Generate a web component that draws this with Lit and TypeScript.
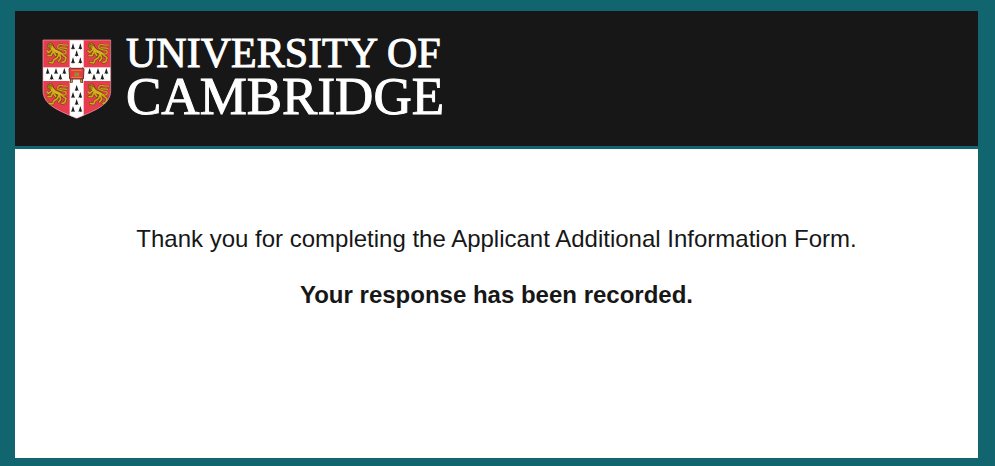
import { LitElement, html, svg, css } from "lit";
import { customElement } from "lit/decorators.js";

const LION_LIMBS =
  "M20 22 L10 30 L5 26 M23 27 L17 40 L8 40 M25 30 L31 39 M46 32 L54 40 L62 46 L58 58 L50 60 M42 34 L36 46 L26 52 L22 62 L12 60 M42 34 L46 48 L40 56";

const LION_TAIL =
  "M50 34 C60 38 67 30 60 25 C54 21 44 24 38 18 C34 10 42 4 50 7 C58 10 62 6 66 9 M44 15 C52 18 58 16 65 18";

const LIONS = [
  [46, 43],
  [169, 43],
  [46, 166],
  [169, 166],
];

const ERMINE_COLUMN = [
  [129, 56], [151, 56], [140, 77], [129, 98], [151, 98],
  [140, 181], [129, 202], [151, 202], [140, 223], [129, 244], [151, 244],
];

const ERMINE_ROW = [
  [53, 130], [78, 130], [103, 130], [65, 147], [91, 147],
  [179, 130], [204, 130], [229, 130], [192, 147], [217, 147],
];

@customElement("cambridge-crest")
export class CambridgeCrest extends LitElement {
  static styles = css`
    :host {
      display: block;
      flex: none;
    }
    .shield {
      display: block;
      width: 70px;
      height: 80px;
    }
  `;

  private lion([x, y]: number[]) {
    return svg`<g transform="translate(${x} ${y})" fill="none" stroke-linecap="round" stroke-linejoin="round">
      <path d=${LION_TAIL} stroke="#7d3f1c" stroke-width="6"/>
      <path d=${LION_LIMBS} stroke="#6b3c14" stroke-width="8"/>
      <path d="M18 14 L28 25 L44 32" stroke="#6b3c14" stroke-width="13"/>
      <circle cx="15" cy="10" r="9" fill="#b58c16" stroke="#6b3c14" stroke-width="2"/>
      <path d=${LION_TAIL} stroke="#c9a11a" stroke-width="4"/>
      <path d=${LION_LIMBS} stroke="#cfaa18" stroke-width="5"/>
      <path d="M18 14 L28 25 L44 32" stroke="#d6b21c" stroke-width="9"/>
      <path d="M10 8 L14 6 M17 8 L20 8 M12 14 L18 14" stroke="#54340f" stroke-width="2"/>
    </g>`;
  }

  private ermine([x, y]: number[]) {
    return svg`<path transform="translate(${x} ${y})" d="M0 -10 L2 -4 L3 0 L6 8 L2 6 L0 9 L-2 6 L-6 8 L-3 0 L-2 -4 Z" fill="#1d1d1f"/>`;
  }

  render() {
    return html`<svg class="shield" viewBox="36 33 210 240" role="img" aria-label="University shield">
      <defs>
        <clipPath id="outline">
          <path d="M39 36 H242 V188 C242 232 192 248 140 271 C88 248 39 232 39 188 Z" />
        </clipPath>
      </defs>
      <g clip-path="url(#outline)">
        <rect x="36" y="33" width="210" height="240" fill="#e73c4e" />
        ${LIONS.map((p) => this.lion(p))}
        <rect x="119" y="33" width="42" height="240" fill="#fff" />
        <rect x="36" y="118" width="210" height="41" fill="#fff" />
        ${ERMINE_COLUMN.map((p) => this.ermine(p))}
        ${ERMINE_ROW.map((p) => this.ermine(p))}
      </g>
      <path d="M39 36 H242 V188 C242 232 192 248 140 271 C88 248 39 232 39 188 Z" fill="none" stroke="#f3a5ac" stroke-width="2" />
      <path d="M124 152 V164 M155 152 V164" stroke="#3b2a12" stroke-width="8" />
      <path d="M124 153 V163 M155 153 V163" stroke="#c99a1c" stroke-width="4" />
      <path d="M117 122 Q120 117 125 121 L154 121 Q161 117 162 123 L160 153 H119 Z" fill="#e23b45" stroke="#6e302c" stroke-width="3" />
      <path d="M124 127 H155 M124 148 H155" stroke="#e97b2b" stroke-width="4" />
      <rect x="133" y="134" width="14" height="10" fill="#b9852b" />
      <circle cx="140" cy="139" r="4" fill="#5f9c43" />
    </svg>`;
  }
}

@customElement("app-root")
export class AppRoot extends LitElement {
  static styles = css`
    :host {
      display: flex;
      box-sizing: border-box;
      min-height: 100vh;
      padding: 11px 17px 8px 15px;
      background: #11656f;
      color: #171717;
      font-family: "Liberation Sans", Arial, sans-serif;
    }
    .page {
      display: flex;
      flex: 1;
      flex-direction: column;
      background: #fff;
    }
    .header {
      display: flex;
      align-items: flex-start;
      gap: 14px;
      padding: 24px 27px;
      background: #171717;
      border-bottom: 3px solid #11656f;
    }
    .crest {
      margin-top: 4px;
    }
    .wordmark {
      display: flex;
      flex-direction: column;
      margin: 0;
      color: #fff;
      font-family: "Liberation Serif", "Times New Roman", serif;
      font-weight: 400;
      white-space: nowrap;
      -webkit-text-stroke: 1px #fff;
    }
    .upper {
      font-size: 42px;
      line-height: 36px;
    }
    .lower {
      font-size: 53px;
      line-height: 51px;
    }
    .message {
      display: flex;
      flex-direction: column;
      gap: 28px;
      padding: 76px 24px;
      font-size: 24px;
      line-height: 28px;
      text-align: center;
    }
    .line {
      margin: 0;
    }
  `;

  render() {
    return html`<div class="page">
      <header class="header">
        <cambridge-crest class="crest"></cambridge-crest>
        <h1 class="wordmark">
          <span class="upper">UNIVERSITY OF</span>
          <span class="lower">CAMBRIDGE</span>
        </h1>
      </header>
      <main class="message">
        <p class="line">Thank you for completing the Applicant Additional Information Form.</p>
        <p class="line"><strong>Your response has been recorded.</strong></p>
      </main>
    </div>`;
  }
}
